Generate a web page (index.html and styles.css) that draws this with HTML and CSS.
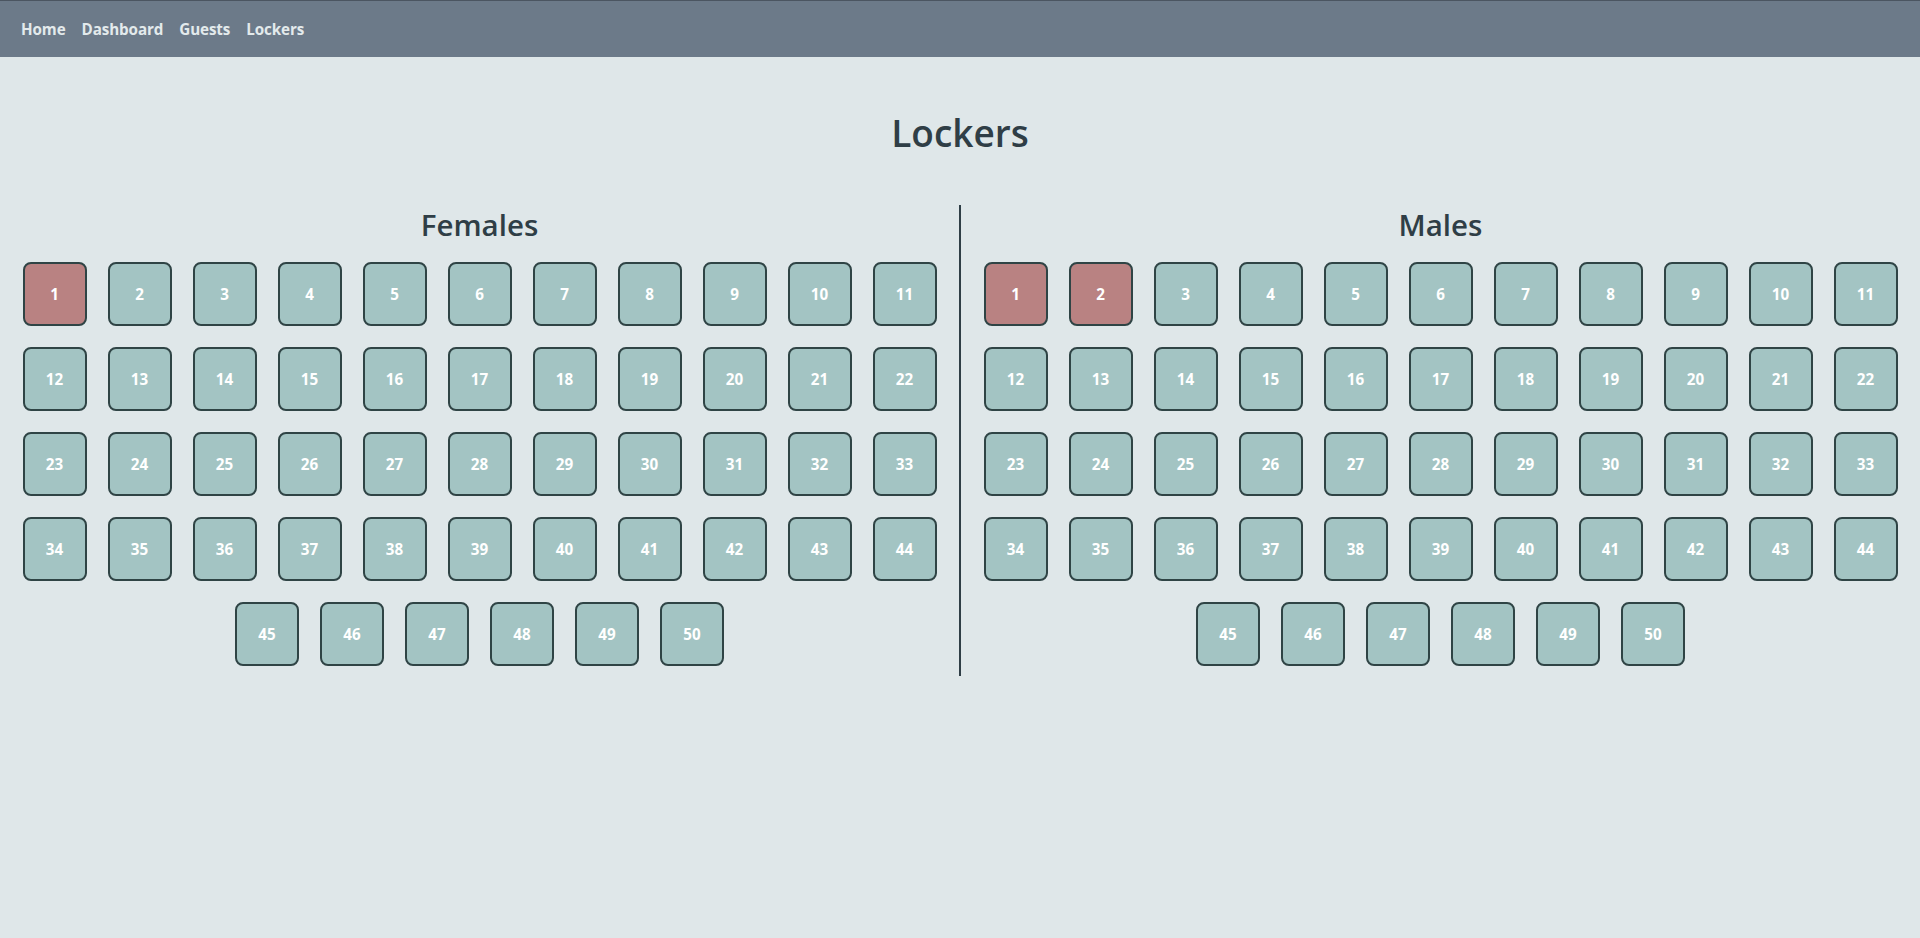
FILE: index.html
```html
<!DOCTYPE html>
<html lang="en">
<head>
<meta charset="utf-8">
<title>Lockers</title>
<link rel="stylesheet" href="styles.css">
</head>
<body>
<nav class="topnav">
  <a href="#" class="nav-link">Home</a>
  <a href="#" class="nav-link">Dashboard</a>
  <a href="#" class="nav-link">Guests</a>
  <a href="#" class="nav-link">Lockers</a>
</nav>
<main class="page">
  <h1 class="page-title">Lockers</h1>
  <div class="sections">
    <section class="section">
      <h2 class="section-title">Females</h2>
      <div class="locker-grid" id="females"></div>
    </section>
    <div class="divider"></div>
    <section class="section">
      <h2 class="section-title">Males</h2>
      <div class="locker-grid" id="males"></div>
    </section>
  </div>
</main>
<script src="app.js"></script>
</body>
</html>
```

FILE: styles.css
```css
* { box-sizing: border-box; }
html, body {
  margin: 0;
  padding: 0;
  background: #dfe7e9;
  font-family: "Open Sans", "Noto Sans", sans-serif;
  color: #2f3e46;
}
.topnav {
  height: 57px;
  background: #6c7a89;
  border-top: 1px solid #4b5561;
  display: flex;
  align-items: center;
  gap: 16px;
  padding: 0 0 0 21px;
}
.nav-link {
  color: #e3eaec;
  text-decoration: none;
  font-weight: 700;
  font-size: 15.2px;
  letter-spacing: -0.1px;
}
.page {
  padding-top: 52px;
}
.page-title {
  margin: 0;
  text-align: center;
  font-size: 37px;
  line-height: 48px;
  font-weight: 600;
  color: #2f3e46;
}
.sections {
  display: flex;
  margin-top: 48px;
}
.section {
  flex: 1;
}
.divider {
  width: 2px;
  background: #2f3e46;
  height: 471px;
}
.section-title {
  margin: 0 0 6px;
  text-align: center;
  font-size: 29.5px;
  line-height: 40px;
  font-weight: 600;
  color: #2f3e46;
}
.locker-grid {
  display: flex;
  flex-wrap: wrap;
  justify-content: center;
  padding: 0 12px;
}
.locker {
  width: 64px;
  height: 64px;
  margin: 10.5px;
  border: 2px solid #2f4445;
  border-radius: 8px;
  background: #a3c4c3;
  color: #ffffff;
  font-weight: 700;
  font-size: 15.2px;
  display: flex;
  align-items: center;
  justify-content: center;
}
.locker.occupied {
  background: #b98282;
}
```

FILE: app.js
```js
function build(id, occupied) {
  var el = document.getElementById(id);
  for (var i = 1; i <= 50; i++) {
    var d = document.createElement('div');
    d.className = 'locker' + (occupied.indexOf(i) >= 0 ? ' occupied' : '');
    d.textContent = i;
    el.appendChild(d);
  }
}
build('females', [1]);
build('males', [1, 2]);
```
